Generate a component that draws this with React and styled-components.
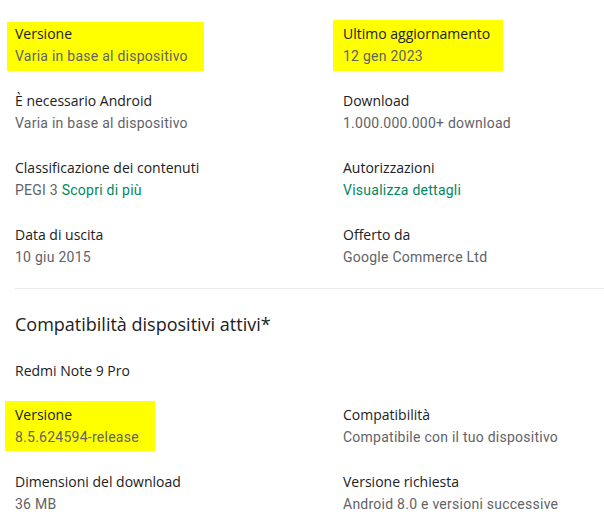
import styled, { createGlobalStyle } from "styled-components";

const GlobalStyle = createGlobalStyle`
  body {
    margin: 0;
    background: #fff;
    font-family: Roboto, "Liberation Sans", Arial, sans-serif;
    overflow: hidden;
  }
`;

const general = [
  { label: "Versione", value: "Varia in base al dispositivo", mark: [2, 16, 7, 8] },
  { label: "Ultimo aggiornamento", value: "12 gen 2023", mark: [4, 13, 7, 10] },
  { label: "È necessario Android", value: "Varia in base al dispositivo" },
  { label: "Download", value: "1.000.000.000+ download" },
  { label: "Classificazione dei contenuti", value: "PEGI 3", link: "Scopri di più" },
  { label: "Autorizzazioni", link: "Visualizza dettagli" },
  { label: "Data di uscita", value: "10 giu 2015" },
  { label: "Offerto da", value: "Google Commerce Ltd" },
];

const device = [
  { label: "Versione", value: "8.5.624594-release", mark: [4, 16, 6, 10] },
  { label: "Compatibilità", value: "Compatibile con il tuo dispositivo" },
  { label: "Dimensioni del download", value: "36 MB" },
  { label: "Versione richiesta", value: "Android 8.0 e versioni successive" },
];

const Info = ({ label, value, link, mark }) => (
  <Item $mark={mark}>
    <Label>{label}</Label>
    <Value>
      {value}
      {value && link ? " " : null}
      {link && <Link href="#">{link}</Link>}
    </Value>
  </Item>
);

export default function App() {
  return (
    <>
      <GlobalStyle />
      <Page>
        <Grid>
          {general.map((it, i) => (
            <Info key={i} {...it} />
          ))}
        </Grid>
        <Divider />
        <Heading>Compatibilità dispositivi attivi*</Heading>
        <DeviceName>Redmi Note 9 Pro</DeviceName>
        <DeviceGrid>
          {device.map((it, i) => (
            <Info key={i} {...it} />
          ))}
        </DeviceGrid>
      </Page>
    </>
  );
}

const Page = styled.div`
  padding: 24px 0 0 15px;
`;

const Grid = styled.div`
  display: grid;
  grid-template-columns: 328px 1fr;
  row-gap: 25px;
  align-items: start;
`;

const DeviceGrid = styled(Grid)`
  margin-top: 24px;
`;

const Item = styled.div`
  display: flex;
  flex-direction: column;
  justify-self: start;
  ${({ $mark }) =>
    $mark &&
    `
    background: #ffff00;
    padding: ${$mark[0]}px ${$mark[1]}px ${$mark[2] - 2}px ${$mark[3]}px;
    margin: -${$mark[0]}px -${$mark[1]}px -${$mark[2] - 2}px -${$mark[3]}px;
  `}
`;

const Label = styled.div`
  font-family: "Open Sans", Roboto, sans-serif;
  font-size: 14px;
  line-height: 20px;
  color: #202124;
  white-space: nowrap;
`;

const Value = styled.div`
  margin-top: 2px;
  font-size: 14px;
  line-height: 20px;
  letter-spacing: 0.25px;
  color: #5f6368;
  white-space: nowrap;
`;

const Link = styled.a`
  color: #01875f;
  text-decoration: none;
`;

const Divider = styled.div`
  height: 1px;
  background: #e8eaed;
  margin-top: 21px;
`;

const Heading = styled.h2`
  margin: 23px 0 0;
  font-family: "Open Sans", Roboto, sans-serif;
  font-size: 18px;
  line-height: 24px;
  font-weight: 400;
  color: #202124;
`;

const DeviceName = styled.div`
  margin-top: 25px;
  font-family: "Open Sans", Roboto, sans-serif;
  font-size: 14px;
  line-height: 20px;
  color: #202124;
`;
